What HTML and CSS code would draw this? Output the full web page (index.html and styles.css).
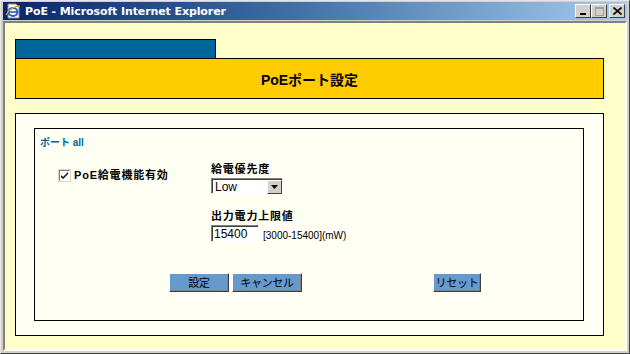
FILE: index.html
```html
<!DOCTYPE html>
<html lang="ja">
<head>
    <meta charset="UTF-8">
    <title>PoE</title>
    <link rel="stylesheet" href="styles.css">
</head>
<body>
    <div class="window">
        <div class="titlebar">
            <svg class="ie-icon" width="16" height="16" viewBox="0 0 16 16">
                <path d="M3 1h8l3 3v11H3z" fill="#fff" stroke="#8a8a8a"/>
                <ellipse cx="8" cy="9" rx="4.5" ry="4" fill="none" stroke="#1e5fc8" stroke-width="2"/>
                <rect x="4" y="8.2" width="8.5" height="1.6" fill="#1e5fc8"/>
                <path d="M1 12c3-6 9-9 14-9" fill="none" stroke="#e8a020" stroke-width="1.3"/>
            </svg>
            <span class="title">PoE - Microsoft Internet Explorer</span>
            <div class="controls">
                <span class="ctl"><svg width="8" height="8" viewBox="0 0 8 8"><rect x="1" y="6" width="6" height="2" fill="#000"/></svg></span>
                <span class="ctl"><svg width="9" height="9" viewBox="0 0 9 9"><rect x="0.5" y="0.5" width="8" height="8" fill="none" stroke="#a0a0a0"/><rect x="0" y="0" width="9" height="2" fill="#a0a0a0"/></svg></span>
                <span class="ctl close"><svg width="9" height="8" viewBox="0 0 9 8"><path d="M0.5 0.5l8 7M8.5 0.5l-8 7" stroke="#000" stroke-width="1.6"/></svg></span>
            </div>
        </div>

        <div class="page">
            <div class="tab"></div>
            <div class="banner">PoEポート設定</div>

            <div class="outer-box">
                <form class="inner-box">
                    <div class="port-name">ポート all</div>
                    <div class="settings">
                        <div class="enable">
                            <label class="check-label"><input type="checkbox" class="check" checked> PoE給電機能有効</label>
                        </div>
                        <div class="fields">
                            <div class="field-label">給電優先度</div>
                            <div class="combo">
                                <select class="combo-select">
                                    <option>Low</option>
                                    <option>High</option>
                                    <option>Critical</option>
                                </select>
                                <span class="combo-btn"><svg width="7" height="4" viewBox="0 0 7 4"><path d="M0 0h7L3.5 4z" fill="#000"/></svg></span>
                            </div>
                            <div class="field-label gap">出力電力上限値</div>
                            <div class="power-row">
                                <input type="text" class="power-input" value="15400">
                                <span class="range">[3000-15400](mW)</span>
                            </div>
                        </div>
                    </div>
                    <div class="buttons">
                        <button type="button" class="btn btn-set">設定</button>
                        <button type="button" class="btn btn-cancel">キャンセル</button>
                        <button type="reset" class="btn btn-reset">リセット</button>
                    </div>
                </form>
            </div>
        </div>
    </div>
</body>
</html>
```

FILE: styles.css
```css
body {
    margin: 0;
    background-color: #d4d0c8;
    font-family: "Liberation Sans", "Noto Sans CJK JP", sans-serif;
}
.window {
    width: 630px;
    height: 354px;
    box-sizing: border-box;
    border: 1px solid;
    border-color: #e8e6e0 #404040 #404040 #e8e6e0;
    padding: 1px 2px 2px 2px;
    background-color: #d4d0c8;
    display: flex;
    flex-direction: column;
}
.titlebar {
    height: 18px;
    flex-shrink: 0;
    display: flex;
    align-items: center;
    background: linear-gradient(to right, #0a246a, #3a6ea5 45%, #a6caf0);
    padding-left: 2px;
}
.ie-icon {
    flex-shrink: 0;
}
.title {
    color: #fff;
    font-family: "DejaVu Sans", "Noto Sans CJK JP", sans-serif;
    font-weight: bold;
    font-size: 11px;
    margin-left: 4px;
    letter-spacing: -0.1px;
}
.controls {
    margin-left: auto;
    display: flex;
    margin-right: 2px;
}
.ctl {
    width: 16px;
    height: 14px;
    box-sizing: border-box;
    background-color: #d4d0c8;
    border: 1px solid;
    border-color: #fff #404040 #404040 #fff;
    display: flex;
    align-items: center;
    justify-content: center;
}
.ctl.close {
    margin-left: 2px;
}
.page {
    flex: 1;
    margin-top: 1px;
    border: 2px solid;
    border-color: #808080 #fff #fff #808080;
    background-color: #ffffcc;
    padding-left: 10px;
    padding-top: 16px;
}
.tab {
    width: 201px;
    height: 19px;
    box-sizing: border-box;
    background-color: #006699;
    border: 1px solid #000;
    border-bottom: none;
}
.banner {
    width: 589px;
    height: 41px;
    box-sizing: border-box;
    background-color: #ffcc00;
    border: 1px solid #000;
    display: flex;
    align-items: center;
    justify-content: center;
    font-weight: bold;
    font-size: 14px;
    color: #000;
}
.outer-box {
    margin-top: 14px;
    width: 589px;
    height: 223px;
    box-sizing: border-box;
    border: 1px solid #000;
    background-color: #fffff4;
    padding: 14px 19px 0 18px;
}
.inner-box {
    margin: 0;
    width: 550px;
    height: 193px;
    box-sizing: border-box;
    border: 1px solid #000;
}
.port-name {
    margin-top: 8px;
    padding-left: 5px;
    color: #006699;
    font-size: 10px;
    font-weight: bold;
    line-height: 12px;
}
.settings {
    margin-top: 13px;
    display: grid;
    grid-template-columns: 176px auto;
}
.enable {
    padding-left: 23px;
    padding-top: 6px;
}
.check-label {
    display: flex;
    align-items: center;
    font-size: 11px;
    font-weight: bold;
    letter-spacing: 0.8px;
    line-height: 14px;
}
.check {
    appearance: none;
    -webkit-appearance: none;
    margin: 0 3px 0 0;
    width: 13px;
    height: 13px;
    box-sizing: border-box;
    border: 2px solid;
    border-color: #808080 #fff #fff #808080;
    outline: 1px solid #d4d0c8;
    outline-offset: -1px;
    background-color: #fff;
}
.check:checked {
    background-image: url("data:image/svg+xml,%3Csvg xmlns='http://www.w3.org/2000/svg' width='9' height='9' viewBox='0 0 9 9'%3E%3Cpath d='M1 4l2 2 5-5v2l-5 5-2-2z' fill='%23000'/%3E%3C/svg%3E");
    background-repeat: no-repeat;
    background-position: center;
}
.field-label {
    font-size: 11px;
    font-weight: bold;
    letter-spacing: 0.8px;
    line-height: 14px;
}
.field-label.gap {
    margin-top: 15px;
}
.combo {
    margin-top: 2px;
    width: 72px;
    height: 16px;
    box-sizing: border-box;
    border: 1px solid;
    border-color: #808080 #fff #fff #808080;
    background-color: #fff;
    display: flex;
    box-shadow: inset 1px 1px 0 #404040;
}
.combo-select {
    appearance: none;
    -webkit-appearance: none;
    flex: 1;
    min-width: 0;
    border: none;
    background: transparent;
    font-family: "Liberation Sans", sans-serif;
    font-size: 12px;
    padding: 0 0 0 2px;
    margin: 1px 0 0 1px;
    height: 14px;
    line-height: 14px;
    outline: none;
}
.combo-btn {
    width: 15px;
    height: 14px;
    box-sizing: border-box;
    margin: 1px 0 0 0;
    background-color: #d4d0c8;
    border: 1px solid;
    border-color: #fff #404040 #404040 #fff;
    display: flex;
    align-items: center;
    justify-content: center;
}
.power-row {
    margin-top: 2px;
    display: flex;
    align-items: center;
}
.power-input {
    width: 48px;
    height: 17px;
    box-sizing: border-box;
    border: 1px solid;
    border-color: #808080 #fff #fff #808080;
    box-shadow: inset 1px 1px 0 #404040;
    font-family: "Liberation Sans", sans-serif;
    font-size: 12px;
    padding: 1px 2px 0 2px;
    margin: 0;
    outline: none;
}
.range {
    margin-left: 4px;
    margin-top: 4px;
    font-size: 10px;
    color: #000;
}
.buttons {
    margin-top: 31px;
    padding-left: 134px;
    display: flex;
}
.btn {
    height: 19px;
    box-sizing: border-box;
    background-color: #6699cc;
    border: 1px solid;
    border-color: #fff #404040 #404040 #fff;
    box-shadow: inset -1px -1px 0 #808080;
    font-family: "Noto Sans CJK JP", sans-serif;
    font-size: 11px;
    line-height: 15px;
    padding: 0;
    white-space: nowrap;
    letter-spacing: -0.3px;
    color: #000;
    cursor: pointer;
}
.btn-set {
    width: 60px;
}
.btn-cancel {
    width: 70px;
    margin-left: 3px;
}
.btn-reset {
    width: 48px;
    margin-left: 131px;
}
```
